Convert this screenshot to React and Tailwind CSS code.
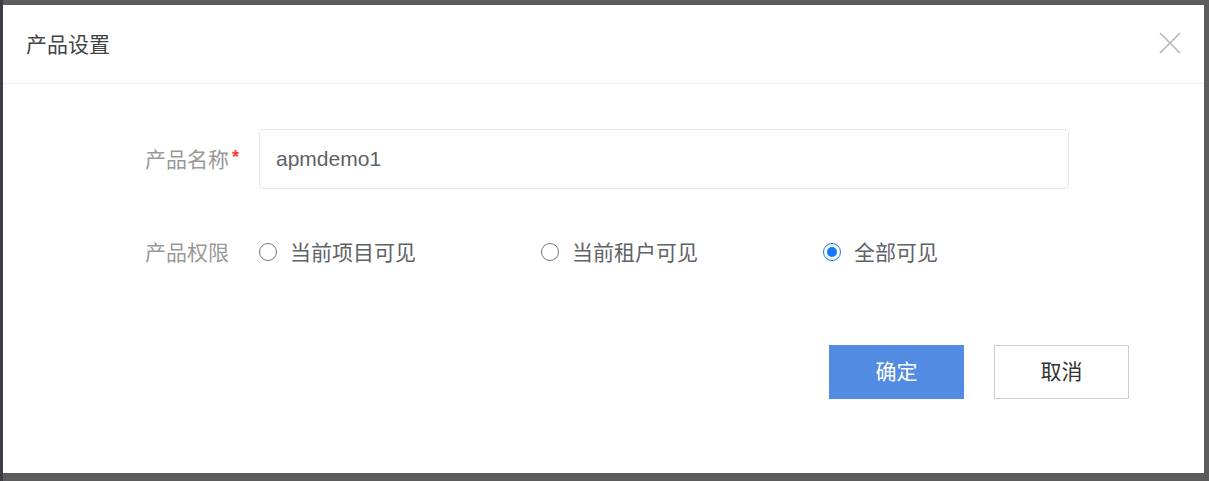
import React from "react";

const font = { fontFamily: '"Liberation Sans", "Noto Sans CJK SC", sans-serif' };

function Radio({ checked, label }) {
  return (
    <div className="flex w-[282px] items-center">
      {checked ? (
        <span className="flex h-[18px] w-[18px] items-center justify-center rounded-full border-[1.5px] border-[#1677ff]">
          <span className="h-[10px] w-[10px] rounded-full bg-[#1677ff]" />
        </span>
      ) : (
        <span className="h-[18px] w-[18px] rounded-full border-[1.5px] border-[#777]" />
      )}
      <span className="ml-[13px] text-[21px] leading-none text-[#606266]">{label}</span>
    </div>
  );
}

export default function App() {
  return (
    <div className="flex h-[481px] w-[1209px] bg-[#5c5c5c]" style={font}>
      <div className="h-full w-[3px] bg-[#3c4044]" />
      <div className="mt-[5px] flex h-[468px] w-[1201px] flex-col bg-white">
        <div className="flex h-[79px] items-center justify-between border-b border-[#f0f0f0] pl-[23px] pr-[23px]">
          <span className="text-[21px] leading-none text-[#444]">产品设置</span>
          <svg width="22" height="22" viewBox="0 0 22 22" className="-mt-[2px]">
            <path d="M1 1 L21 21 M21 1 L1 21" stroke="#b5b5b5" strokeWidth="1.6" fill="none" />
          </svg>
        </div>
        <div className="flex flex-col pl-[142px]">
          <div className="mt-[45px] flex h-[60px] items-center">
            <div className="flex w-[114px] items-center text-[21px] leading-none text-[#999]">
              产品名称<span className="ml-[3px] -mt-[4px] text-[18px] font-bold text-[#f04134]">*</span>
            </div>
            <div className="flex h-[60px] w-[810px] items-center rounded-[4px] border border-[#e2e5ec] pl-[16px] text-[21px] text-[#606266]">
              apmdemo1
            </div>
          </div>
          <div className="mt-[43px] flex h-[40px] items-center">
            <div className="w-[114px] text-[21px] leading-none text-[#999]">产品权限</div>
            <Radio label="当前项目可见" />
            <Radio label="当前租户可见" />
            <Radio checked label="全部可见" />
          </div>
        </div>
        <div className="mt-[73px] flex justify-end gap-[30px] pr-[75px]">
          <button className="flex h-[54px] w-[135px] items-center justify-center bg-[#518ce2] text-[21px] text-white">
            确定
          </button>
          <button className="flex h-[54px] w-[135px] items-center justify-center border border-[#cccccc] bg-white text-[21px] text-[#333]">
            取消
          </button>
        </div>
      </div>
    </div>
  );
}
